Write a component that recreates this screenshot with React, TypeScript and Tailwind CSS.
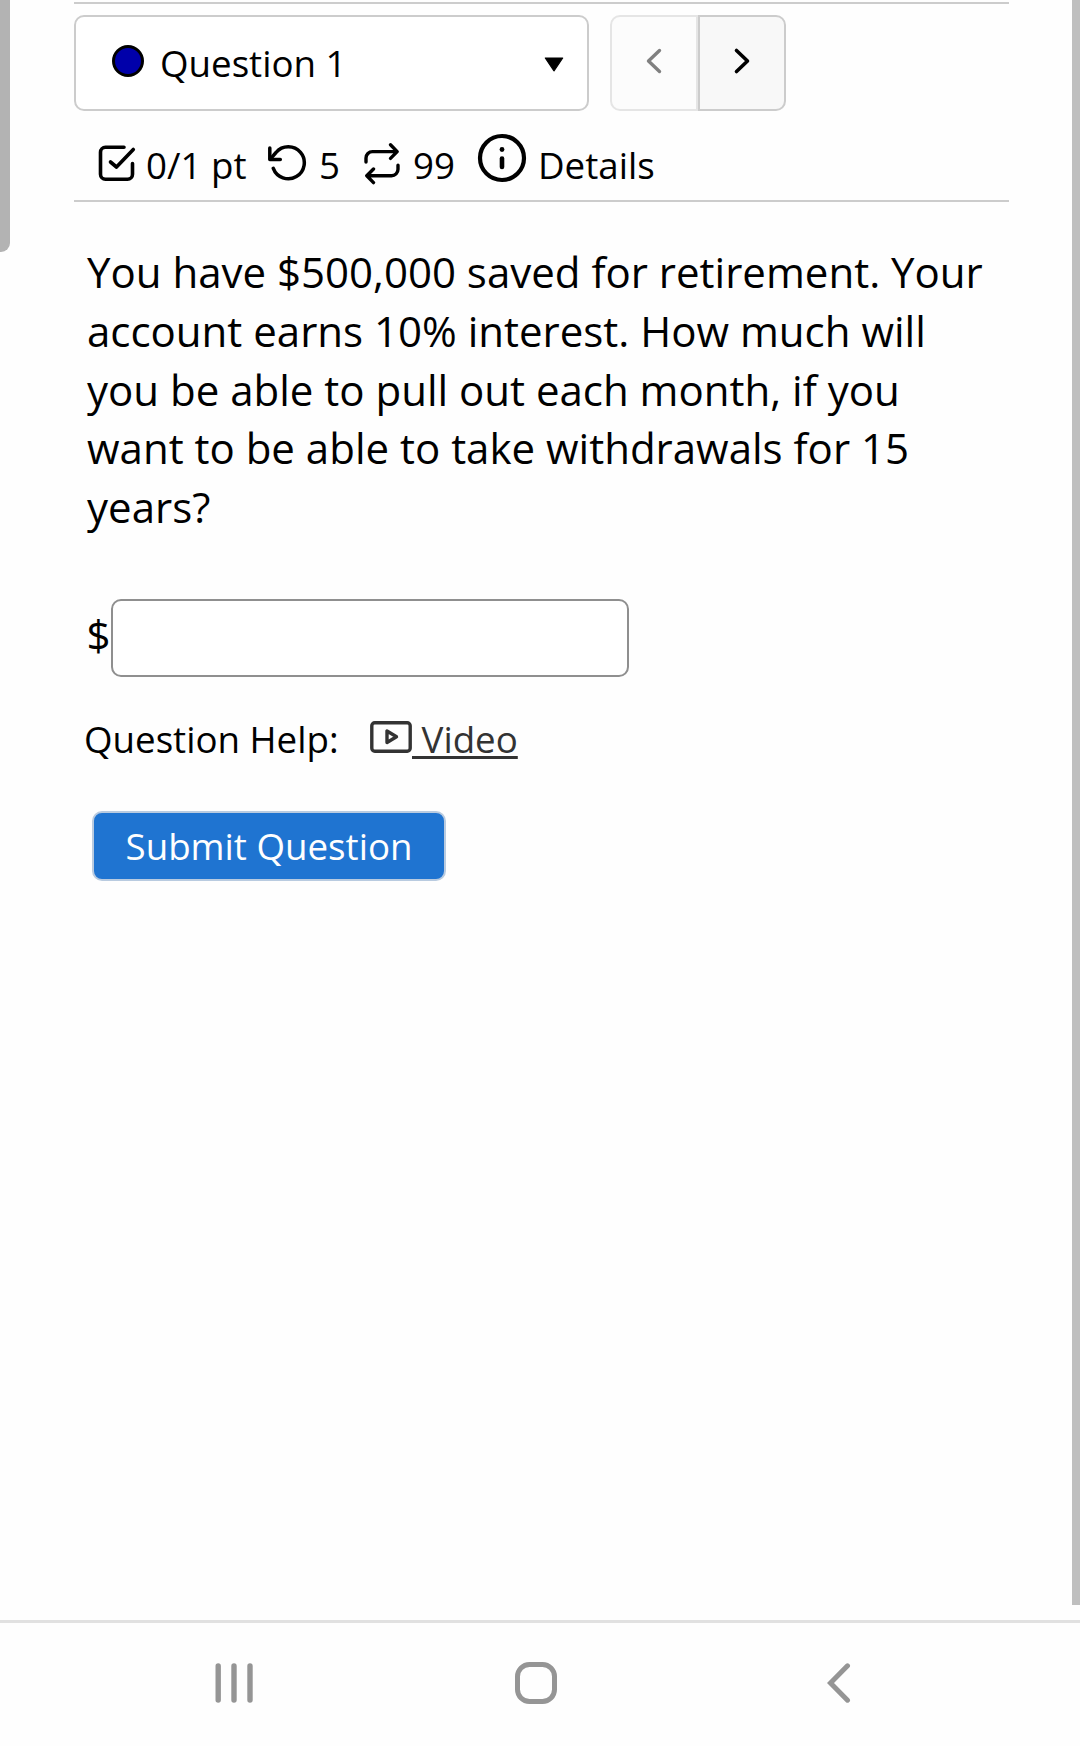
import React from "react";

const stroke = {
  fill: "none",
  stroke: "currentColor",
  strokeLinecap: "round" as const,
  strokeLinejoin: "round" as const,
};

function CheckSquare() {
  return (
    <svg className="h-[38px] w-[38px] shrink-0" viewBox="0 0 38 38" {...stroke} strokeWidth="3.6">
      <path d="M26 3.3H7.5a5 5 0 0 0-5 5v22a5 5 0 0 0 5 5h22a5 5 0 0 0 5-5V19.5" />
      <path d="M12.500 18l6 5L35.300 5.500" />
    </svg>
  );
}

function Undo() {
  return (
    <svg className="h-[38px] w-[40px] shrink-0" viewBox="0 0 40 38" {...stroke} strokeWidth="3.5">
      <path d="M2.800 4v11.500h10.500" />
      <path d="M3.500 14.800L9 8.500A16 16 0 1 1 6.300 24.300" />
    </svg>
  );
}

function Repeat() {
  return (
    <svg className="h-[43px] w-[39px] shrink-0" viewBox="0 0 39 43" {...stroke} strokeWidth="3.4">
      <path d="M27.500 2.800l6.700 6.800-6.700 6.800M34 9.600H9.500a6.500 6.500 0 0 0-6.500 6.500v4" />
      <path d="M10.500 27l-6.700 6.800 6.700 6.800M4 33.800h24.500a6.500 6.500 0 0 0 6.500-6.500v-4" />
    </svg>
  );
}

function Info() {
  return (
    <svg className="h-[50px] w-[50px] shrink-0" viewBox="0 0 50 50" {...stroke} strokeWidth="4.2">
      <circle cx="25" cy="25" r="22" />
      <path d="M25 25.500v8.500" strokeWidth="4.6" />
      <circle cx="25" cy="16.500" r="2.400" fill="currentColor" stroke="none" />
    </svg>
  );
}

export default function App() {
  return (
    <div className="relative flex h-[1746px] w-[1080px] flex-col overflow-hidden bg-[#fefefe] font-['Open_Sans','Noto_Sans',sans-serif] text-black">
      <div className="absolute left-0 top-0 h-[252px] w-[10px] rounded-br-[9px] bg-[#b3b3b3]" />
      <div className="absolute right-0 top-0 h-[1605px] w-2 bg-[#bfbfbf]" />

      <main className="ml-[74px] flex w-[935px] flex-1 flex-col">
        <header className="mt-[2px] flex h-[200px] flex-col border-y-2 border-[#ccc]">
          <div className="mt-[11px] flex h-24 shrink-0">
            <div className="flex w-[515px] items-center rounded-[10px] border-2 border-[#ccc] bg-white">
              <span className="ml-9 -mt-[4px] h-8 w-8 rounded-full border-[3px] border-black bg-[#0000aa]" />
              <span className="ml-4 whitespace-nowrap text-[36.7px] leading-[48px]">Question 1</span>
              <svg className="ml-auto mr-[23px] mt-[3px] h-[15px] w-[20px]" viewBox="0 0 20 15">
                <path d="M1.300 1h17.400L10 13.800z" fill="black" stroke="black" strokeWidth="1.2" strokeLinejoin="round" />
              </svg>
            </div>
            <div className="ml-[21px] flex w-[176px]">
              <button className="flex w-[88px] items-center justify-center rounded-l-[10px] border-2 border-[#e5e5e5] bg-[#fcfcfc] text-[#808080]">
                <svg className="-mt-1 h-7 w-5" viewBox="0 0 20 28" {...stroke} strokeWidth="3.4">
                  <path d="M15.500 3.500L4.500 14l11 10.500" />
                </svg>
              </button>
              <button className="flex w-[88px] items-center justify-center rounded-r-[10px] border-2 border-[#ccc] bg-[#f8f8f8]">
                <svg className="-mt-1 h-7 w-5" viewBox="0 0 20 28" {...stroke} strokeWidth="3.6">
                  <path d="M4.500 3.500l11 10.500-11 10.500" />
                </svg>
              </button>
            </div>
          </div>
          <div className="flex h-[87px] items-start text-[36.7px] leading-[48px]">
            <div className="ml-6 flex w-[169px] items-start">
              <div className="mt-[33px]"><CheckSquare /></div>
              <span className="ml-[10px] mt-[30px] whitespace-nowrap">0/1 pt</span>
            </div>
            <div className="flex w-[96px] items-start">
              <div className="mt-[33px]"><Undo /></div>
              <span className="ml-[12px] mt-[30px]">5</span>
            </div>
            <div className="flex w-[114px] items-start">
              <div className="mt-[31px]"><Repeat /></div>
              <span className="ml-[11px] mt-[30px]">99</span>
            </div>
            <div className="flex items-start">
              <div className="mt-[22px]"><Info /></div>
              <span className="ml-[11px] mt-[30px]">Details</span>
            </div>
          </div>
        </header>

        <section className="ml-[13px] mt-[41.2px] h-[294.8px] whitespace-nowrap text-[42px] leading-[58.7px]">
          <p>You have $500,000 saved for retirement. Your</p>
          <p>account earns 10% interest. How much will</p>
          <p>you be able to pull out each month, if you</p>
          <p>want to be able to take withdrawals for 15</p>
          <p>years?</p>
        </section>

        <label className="ml-3 mt-[61px] flex h-[78px] items-center">
          <span className="-mt-[6px] w-[25px] pl-[0.5px] text-[42px] leading-[58px]">$</span>
          <input className="h-[78px] w-[518px] rounded-[10px] border-2 border-[#8f8f8f] bg-white px-3 text-[36px] outline-none" />
        </label>

        <div className="ml-[10px] mt-[39px] flex h-[50px] items-start text-[36.7px] leading-[48px]">
          <span className="-mt-px w-[286px] whitespace-nowrap">Question Help:</span>
          <a className="flex items-start text-[#333]">
            <svg className="mt-[5px] h-[32px] w-[42px]" viewBox="0 0 42 32" {...stroke} strokeWidth="3.4">
              <rect x="1.800" y="1.800" width="38.400" height="28.400" rx="3" />
              <path d="M17 10v11.500l9.500-5.700z" />
            </svg>
            <span className="-mt-px whitespace-pre underline decoration-[3px] underline-offset-[3px]"> Video</span>
          </a>
        </div>

        <button className="ml-[18px] mt-[45px] flex h-[70px] w-[354px] items-center justify-center rounded-[10px] border-2 border-[#b9cbe0] bg-[#1f74d1] text-[36.7px] leading-[48px] text-[#fefefe]">
          <span className="whitespace-nowrap">Submit Question</span>
        </button>
      </main>

      <nav className="flex h-[126px] shrink-0 items-start border-t-[3px] border-[#e1e1e1] text-[#959595]">
        <svg className="ml-[215px] mt-10 h-10 w-[39px]" viewBox="0 0 39 40" {...stroke} strokeWidth="5.4">
          <path d="M3.200 3v34M19 3v34M35 3v34" />
        </svg>
        <svg className="ml-[261px] mt-[39px] h-[42px] w-[42px]" viewBox="0 0 42 42" {...stroke} strokeWidth="5">
          <rect x="2.500" y="2.500" width="37" height="37" rx="12" />
        </svg>
        <svg className="ml-[270px] mt-10 h-10 w-6" viewBox="0 0 24 40" {...stroke} strokeWidth="5" strokeLinejoin="miter">
          <path d="M20.500 2.800L3.500 20l17 17.200" />
        </svg>
      </nav>
    </div>
  );
}
